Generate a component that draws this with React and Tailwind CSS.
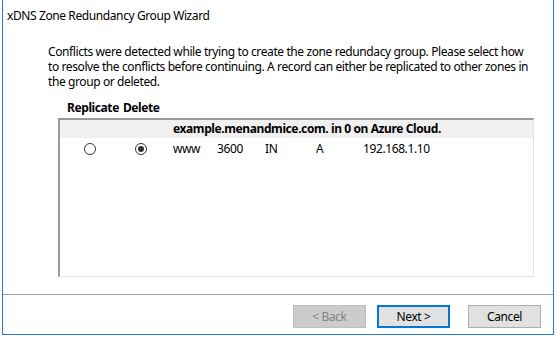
import React from "react";

const Radio = ({ checked }) => (
  <span className="flex items-center justify-center w-[12px] h-[12px] rounded-full border border-[#333333] bg-white">
    {checked && <span className="w-[6px] h-[6px] rounded-full bg-[#333333]" />}
  </span>
);

const Button = ({ children, variant }) => {
  const styles = {
    disabled: "bg-[#cccccc] border border-[#bfbfbf] text-[#838383]",
    primary: "bg-[#e1e1e1] border-2 border-[#0078d7] text-black",
    normal: "bg-[#e1e1e1] border border-[#adadad] text-black",
  };
  return (
    <button
      className={`w-[73px] h-[23px] flex items-center justify-center text-[12px] leading-none ${styles[variant]}`}
    >
      {children}
    </button>
  );
};

export default function App() {
  return (
    <div
      className="w-[557px] h-[340px] bg-white text-black tracking-[-0.4px] whitespace-nowrap"
      style={{ fontFamily: '"Noto Sans", "Open Sans", sans-serif' }}
    >
      <div className="ml-[2px] w-[552px] h-[335px] border-x border-b border-[#2b7bd0] flex flex-col">
        <div className="mt-[8px] pl-[4px] text-[12px] leading-[16px]">
          xDNS Zone Redundancy Group Wizard
        </div>

        <p className="mt-[20px] pl-[45px] text-[12px] leading-[15px]">
          Conflicts were detected while trying to create the zone redundacy group. Please select how
          <br />
          to resolve the conflicts before continuing. A record can either be replicated to other zones in
          <br />
          the group or deleted.
        </p>

        <div className="mt-[11px] pl-[64px] flex gap-[4px] text-[12px] leading-[16px] font-bold">
          <span>Replicate</span>
          <span>Delete</span>
        </div>

        <div className="mt-[2px] ml-[55px] w-[476px] h-[159px] border-t-2 border-l-2 border-[#9a9a9a] border-r border-b border-r-[#e3e3e3] border-b-[#e3e3e3] bg-white">
          <div className="h-[18px] bg-[#f0f0f0] pl-[113px] flex items-center text-[12px] font-bold">
            example.menandmice.com. in 0 on Azure Cloud.
          </div>
          <div className="h-[22px] flex items-center text-[12px]">
            <span className="ml-[24px]">
              <Radio />
            </span>
            <span className="ml-[39px]">
              <Radio checked />
            </span>
            <span className="ml-[26px] w-[44px]">www</span>
            <span className="w-[48px]">3600</span>
            <span className="w-[51px]">IN</span>
            <span className="w-[47px]">A</span>
            <span>192.168.1.10</span>
          </div>
        </div>

        <div className="mt-[17px] h-px bg-[#a0a0a0]" />

        <div className="mt-[10px] pr-[12px] flex justify-end">
          <Button variant="disabled">&lt; Back</Button>
          <span className="ml-[11px]">
            <Button variant="primary">Next &gt;</Button>
          </span>
          <span className="ml-[18px]">
            <Button variant="normal">Cancel</Button>
          </span>
        </div>
      </div>
    </div>
  );
}
